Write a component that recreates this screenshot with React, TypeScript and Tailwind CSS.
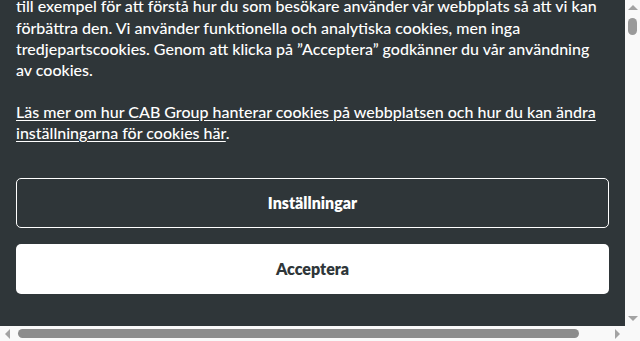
import React from 'react'

const font = { fontFamily: 'Lato, "Open Sans", sans-serif' }

const Arrow = ({ dir }: { dir: 'up' | 'down' | 'left' | 'right' }) => {
  const pts = {
    up: '0,5 5,0 10,5',
    down: '0,0 10,0 5,5',
    left: '5,0 5,10 0,5',
    right: '0,0 0,10 5,5',
  }[dir]
  const vertical = dir === 'up' || dir === 'down'
  return (
    <svg width={vertical ? 10 : 5} height={vertical ? 5 : 10} viewBox={vertical ? '0 0 10 5' : '0 0 5 10'}>
      <polygon points={pts} fill="#a3a3a3" />
    </svg>
  )
}

export default function App() {
  return (
    <div className="flex h-[341px] w-[640px] flex-col bg-[#f9f9f9]" style={font}>
      <div className="flex h-[326px]">
        <div
          ref={(el) => {
            if (el) el.scrollTop = 86
          }}
          className="h-[326px] w-[625px] overflow-hidden"
        >
          <section className="w-[625px] bg-[#2f3639] px-4 pt-6 pb-8 text-white">
            <h2 className="mb-2 text-xl leading-7 font-bold">Vi använder cookies</h2>
            <p className="text-[16px] leading-[21.33px] font-medium">
              CAB Group använder cookies för att ge dig en bättre upplevelse av webbplatsen,
              <br />
              till exempel för att förstå hur du som besökare använder vår webbplats så att vi kan
              förbättra den. Vi använder funktionella och analytiska cookies, men inga
              tredjepartscookies. Genom att klicka på ”Acceptera” godkänner du vår användning
              av cookies.
            </p>
            <p className="mt-5 text-[16px] leading-[21.33px] font-medium">
              <a href="#" className="underline underline-offset-2">
                Läs mer om hur CAB Group hanterar cookies på webbplatsen och hur du kan ändra
                inställningarna för cookies här
              </a>
              .
            </p>
            <div className="mt-[35px] flex flex-col gap-4">
              <button className="h-[50px] rounded-[5px] border border-white text-[16px] font-extrabold text-white">
                Inställningar
              </button>
              <button className="h-[50px] rounded-[5px] bg-white text-[16px] font-extrabold text-[#2f3639]">
                Acceptera
              </button>
            </div>
          </section>
        </div>
        {/* vertical scrollbar */}
        <div className="flex w-[15px] flex-col items-center">
          <div className="flex h-[15px] items-center justify-center">
            <Arrow dir="up" />
          </div>
          <div className="mt-[3px] h-[17px] w-[9px] rounded-full bg-[#9a9a9a]" />
          <div className="flex-1" />
          <div className="flex h-[15px] items-center justify-center">
            <Arrow dir="down" />
          </div>
        </div>
      </div>
      {/* horizontal scrollbar */}
      <div className="flex h-[15px] w-[625px] items-center">
        <div className="flex w-[15px] justify-center">
          <Arrow dir="left" />
        </div>
        <div className="ml-[3px] h-[9px] w-[561px] rounded-full bg-[#8c8c8c]" />
        <div className="flex-1" />
        <div className="flex w-[15px] justify-center">
          <Arrow dir="right" />
        </div>
      </div>
    </div>
  )
}
